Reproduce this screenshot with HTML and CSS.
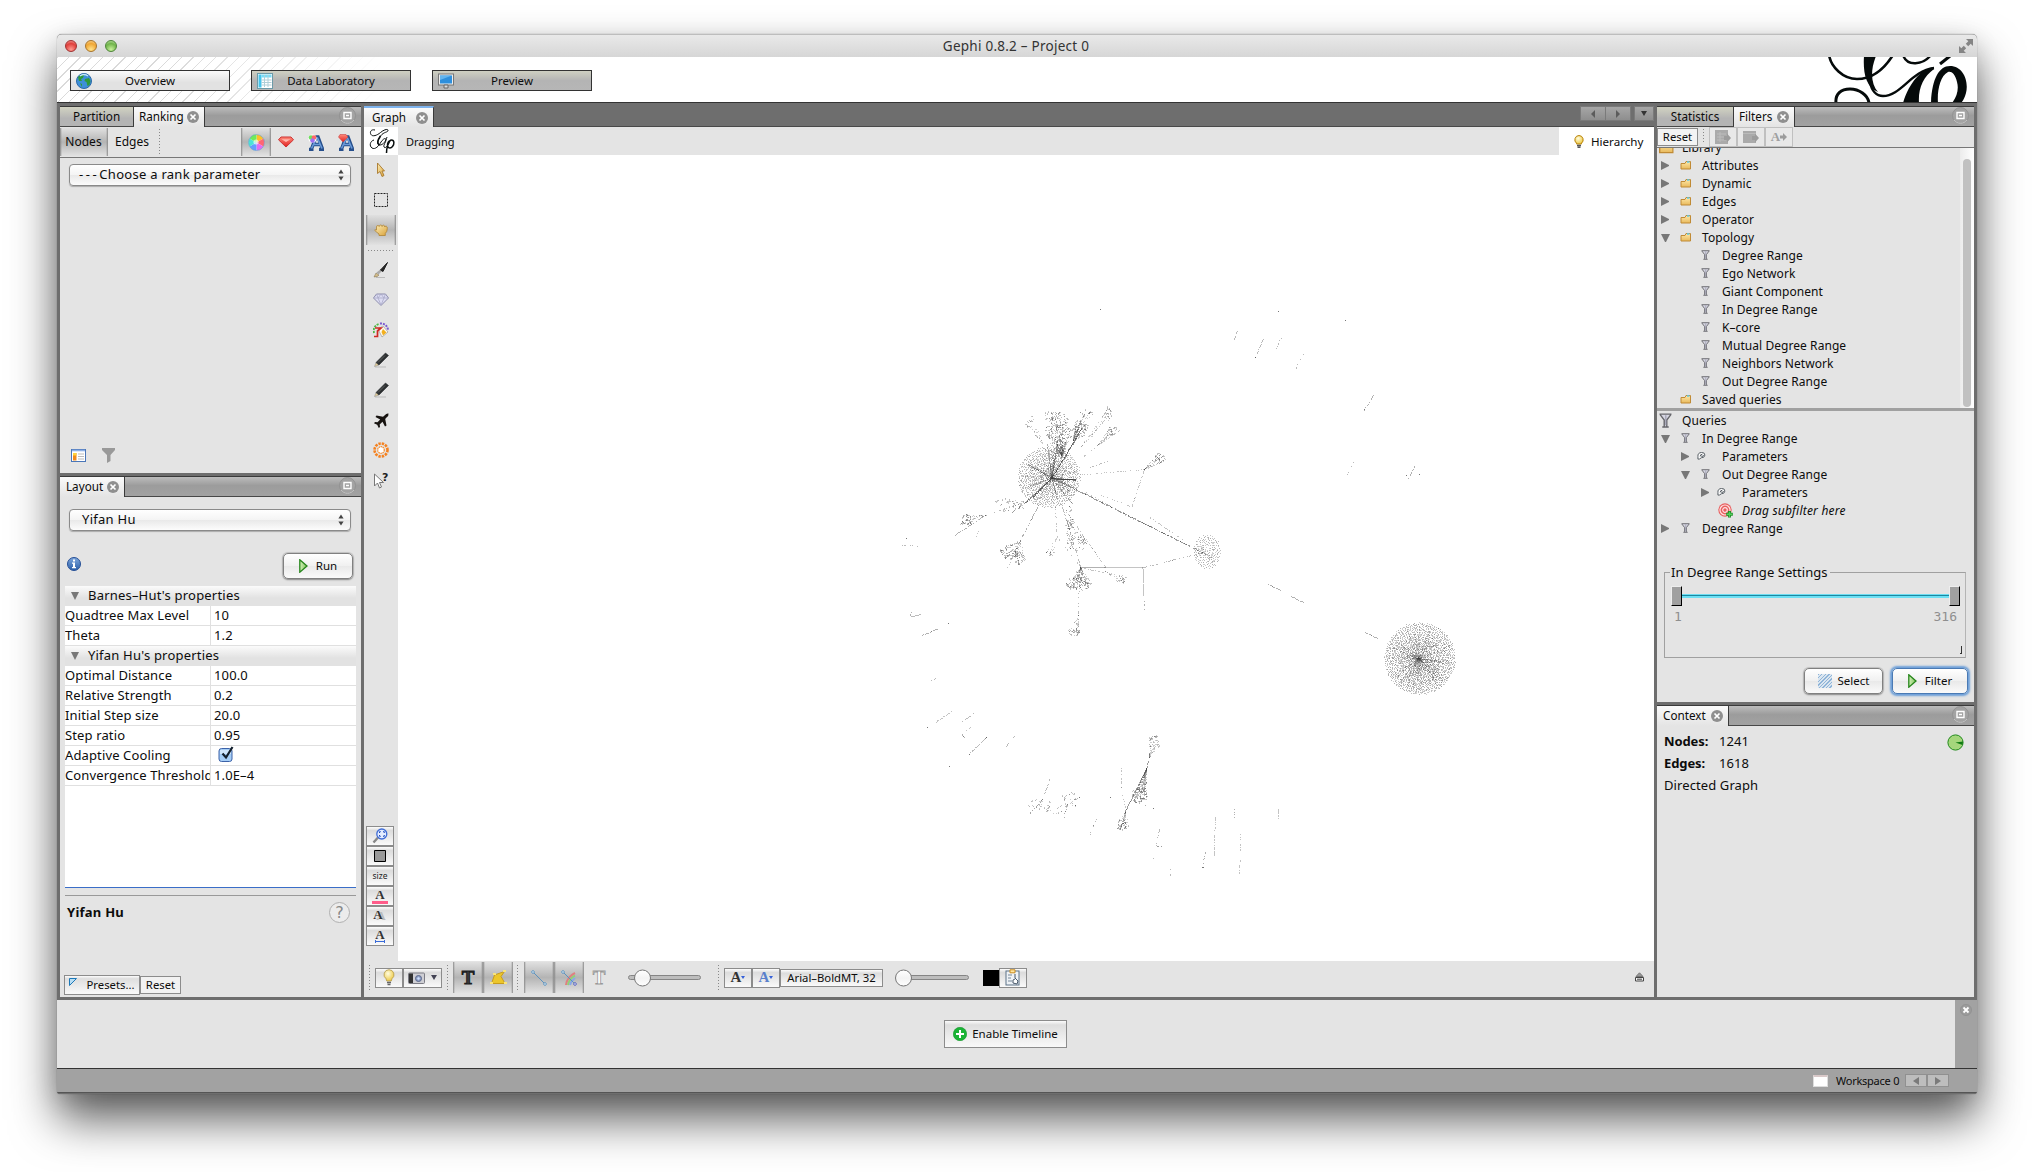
FILE: index.html
```html
<!DOCTYPE html>
<html lang="en">
<head>
<meta charset="utf-8">
<title>Gephi 0.8.2 - Project 0</title>
<link rel="stylesheet" href="styles.css">
</head>
<body>
<svg class="defs" width="0" height="0" aria-hidden="true">
  <defs>
    <linearGradient id="gold" x1="0" y1="0" x2="1" y2="1"><stop offset="0" stop-color="#fdeeb8"/><stop offset="1" stop-color="#d9a23a"/></linearGradient>
    <linearGradient id="fold" x1="0" y1="0" x2="0" y2="1"><stop offset="0" stop-color="#ffe9a8"/><stop offset="1" stop-color="#e8b95c"/></linearGradient>
    <linearGradient id="play" x1="0" y1="0" x2="1" y2="0"><stop offset="0" stop-color="#d4f2b8"/><stop offset="1" stop-color="#7cc05a"/></linearGradient>
    <linearGradient id="knob" x1="0" y1="0" x2="0" y2="1"><stop offset="0" stop-color="#fff"/><stop offset=".5" stop-color="#f3f3f3"/><stop offset="1" stop-color="#fff"/></linearGradient>
    <linearGradient id="red" x1="0" y1="0" x2="0" y2="1"><stop offset="0" stop-color="#ff8a7a"/><stop offset="1" stop-color="#e02020"/></linearGradient>
    <linearGradient id="blue" x1="0" y1="0" x2="0" y2="1"><stop offset="0" stop-color="#7fa8dc"/><stop offset="1" stop-color="#2a5ea8"/></linearGradient>
    <radialGradient id="bulb" cx=".4" cy=".35" r=".7"><stop offset="0" stop-color="#fffde0"/><stop offset="1" stop-color="#ecc63c"/></radialGradient>
  </defs>
  <symbol id="close" viewBox="0 0 12 12"><circle cx="6" cy="6" r="6" fill="#8f8f8f"/><path d="M3.500 3.500l5 5M8.500 3.500l-5 5" stroke="#fff" stroke-width="1.700"/></symbol>
  <symbol id="min" viewBox="0 0 17 17"><circle cx="8.500" cy="8.500" r="8" fill="#a3a3a3" stroke="#8e8e8e" stroke-width=".8"/><path d="M2 13a8 8 0 0 0 13 0" fill="none" stroke="#c4c4c4"/><path d="M5 5.500h7v6H5zM7 8.500h3" fill="none" stroke="#fff" stroke-width="1.400"/></symbol>
  <symbol id="folder" viewBox="0 0 11 10"><path d="M1 3.500h4l1-2h4.500v7.500h-9.500z" fill="url(#fold)" stroke="#c08a35"/><path d="M7 2h2.500" stroke="#5cc8e8" stroke-width="1.500"/></symbol>
  <symbol id="funnel" viewBox="0 0 12 14"><path d="M2 1.500h8L6.900 6.500V12H5.100V6.500z" fill="#d6d6e2"/><path d="M.4 1h11.200M1 1.500l3.800 5v6M11 1.500L7.200 6.500v6M3 13h6" fill="none" stroke="#66666c" stroke-width="1.300"/><path d="M6.300 2v9.500" stroke="#99a"/></symbol>
  <symbol id="wrench" viewBox="0 0 10 9"><path d="M1 8V5q-.5-4 4-4.500 4 0 3.800 3-.3 3-4 3Q2.500 8.500 1 8zM3.500 5q0-2.500 2.500-2.500M4.500 4.500l2 .5.800-1.500" fill="#fff" stroke="#555c62" stroke-width="1.100"/></symbol>
  <symbol id="playic" viewBox="0 0 9 14"><path d="M.8.8L8 7 .8 13.200z" fill="url(#play)" stroke="#25851b" stroke-width="1.300"/></symbol>
  <symbol id="gem" viewBox="0 0 16 12"><path d="M3 1h10l2.500 2.800L8 11 .5 3.800z"/><path d="M3.500 3.200h9L8 6z" fill="#ffb9ae" stroke="none"/></symbol>
  <symbol id="wheel" viewBox="0 0 17 17"><circle cx="8.500" cy="8.500" r="8.200" fill="#fff"/>
    <g opacity=".85"><path d="M8.500 8.500L8.500.5A8 8 0 0 1 15.400 4.500z" fill="#ffb400"/><path d="M8.500 8.500L15.400 4.500a8 8 0 0 1 0 8z" fill="#ff4d5b"/><path d="M8.500 8.500L15.400 12.500a8 8 0 0 1-6.900 4z" fill="#e052f0"/><path d="M8.500 8.500V16.500a8 8 0 0 1-6.900-4z" fill="#4a8cff"/><path d="M8.500 8.500L1.600 12.500a8 8 0 0 1 0-8z" fill="#2de0d0"/><path d="M8.500 8.500L1.600 4.500A8 8 0 0 1 8.500.5z" fill="#58e83e"/></g><circle cx="8.500" cy="8.500" r="8" fill="none" stroke="#6aa0c8" stroke-width=".7"/><circle cx="8" cy="8" r="2.600" fill="#fff" opacity=".6"/></symbol>
  <symbol id="pencil" viewBox="0 0 16 16"><path d="M2 15h11" stroke="#bbb"/><path d="M1.500 14.500l1.500-4 3 2.500z" fill="#e5cf9a" stroke="#888" stroke-width=".5"/><path d="M3 10.500L12.500 1l3 2.500L6 13z" fill="#2c2f30" stroke="#2c2f30" stroke-width=".6"/><path d="M5 10.500l7-7" stroke="#777" stroke-width=".7"/></symbol>
  <symbol id="comboarr" viewBox="0 0 6 12"><path d="M3 .5L5.600 4.500H.4zM3 11.500L5.600 7.500H.4z" fill="#444"/></symbol>
</svg>

<main class="window">
  <header class="titlebar">
    <div class="lights"><i class="l-red"></i><i class="l-yellow"></i><i class="l-green"></i></div>
    <span class="title">Gephi 0.8.2 – Project 0</span>
    <svg class="expand" width="14" height="14" viewBox="0 0 14 14"><path d="M7 0h7v7l-2.300-2.300-2.500 2.500L6.800 4.800 9.300 2.300zM7 14H0V7l2.300 2.300 2.500-2.500 2.400 2.400-2.500 2.500z" fill="#858585"/></svg>
  </header>

  <nav class="banner">
    <div class="stripes"></div>
    <div class="persp active"><svg width="16" height="16" viewBox="0 0 16 16"><circle cx="8" cy="8" r="7.500" fill="#3d8fd8" stroke="#2a68a8"/><path d="M2 4q3-3 6-2l-1 3-2 1 1 2-3 0z M9 6l4-1 1.500 3-1 4-2 1-1-4-2-1z M4 10l2 1 0 3z" fill="#2f9a3a"/><path d="M4 3q4-3 8 0" stroke="#c4e8fa" stroke-width="1.500" fill="none"/></svg><span>Overview</span></div>
    <div class="persp"><svg width="16" height="16" viewBox="0 0 16 16"><rect x=".5" y=".5" width="15" height="15" fill="#fff" stroke="#6c9aa8"/><path d="M1.500 1.500h3v13h-3z" fill="#45c4ec"/><path d="M4.500 1.500h10v3h-10z" fill="#7adcf5"/><path d="M4.500 7h10M4.500 9.500h10M4.500 12h10M7.500 2v12M11 2v12" stroke="#b0cfd8"/></svg><span>Data Laboratory</span></div>
    <div class="persp"><svg width="16" height="16" viewBox="0 0 16 16"><rect x=".5" y="1" width="15" height="11" fill="#eee" stroke="#777"/><rect x="2" y="2.500" width="12" height="8" fill="#2e8fdc"/><path d="M2 7l12-4.500V2.500H2z" fill="#62b4ee"/><path d="M6 12h4v3H6z" fill="#ddd" stroke="#666"/></svg><span>Preview</span></div>
    <svg class="brand" width="142" height="45" viewBox="0 0 142 45" fill="none" stroke="#050a0a">
      <path d="M2-2C4 10 16 22 30 22S56 14 66-2" stroke-width="2.600"/>
      <path d="M45-2C38 14 42 39 56 39 74 39 84 14 107 11" stroke-width="2.400"/>
      <path d="M37-1h12C43 14 44 27 51 35 38 30 36 14 37-1z" fill="#050a0a" stroke="none"/>
      <path d="M9 46C8 37 14 32 23 32S41 38 42 46" stroke-width="3"/>
      <path d="M76-2C80 10 96 8 104-2" stroke-width="2.400"/>
      <path d="M123-1L113 7" stroke-width="3"/>
      <path d="M107 10C94 12 82 26 76 46h16C91 32 96 20 107 12z" fill="#050a0a" stroke="none"/>
      <path fill-rule="evenodd" d="M104 46C105 22 112 9 123 9 136 9 142 24 139 36 138 40 136 44 134 46h-9C130 40 132 32 130 25 128 16 124 14 121 15 113 19 110 34 111 46z" fill="#050a0a" stroke="none"/>
    </svg>
  </nav>

  <div class="work">
    <div class="col left">
      <section class="panel ranking">
        <div class="tabs"><div class="tab t-part">Partition</div><div class="tab on t-rank">Ranking<svg class="x" width="12" height="12"><use href="#close"/></svg></div><svg class="mn" width="17" height="17"><use href="#min"/></svg></div>
        <div class="ranktools">
          <div class="tog nodes">Nodes</div><span class="edges">Edges</span><i class="grip"></i>
          <div class="rankicons">
            <div class="tog ic"><svg width="17" height="17"><use href="#wheel"/></svg></div>
            <div class="ic"><svg width="16" height="12" fill="url(#red)" stroke="#c33"><use href="#gem"/></svg></div>
            <div class="ic"><svg width="17" height="17" viewBox="0 0 17 17"><path d="M1 15.500h4.500M11 15.500h5M3.500 15L8 3h2l4.500 12M5.500 10.500h7" stroke="#264f8c" stroke-width="3.400" fill="none"/><path d="M3.500 14.500L8.500 4h1l4.500 10.500M5.500 10.500h7" stroke="#6a9ad8" stroke-width="1.600" fill="none"/><circle cx="4.500" cy="4.500" r="4" fill="#fff"/><circle cx="3" cy="3.500" r="2.300" fill="#6fe060"/><circle cx="6" cy="3.500" r="2.300" fill="#f66"/><circle cx="4.500" cy="6.500" r="2.300" fill="#a070f0"/></svg></div>
            <div class="ic"><svg width="17" height="17" viewBox="0 0 17 17"><path d="M1 15.500h4.500M11 15.500h5M3.500 15L8 3h2l4.500 12M5.500 10.500h7" stroke="#264f8c" stroke-width="3.400" fill="none"/><path d="M3.500 14.500L8.500 4h1l4.500 10.500M5.500 10.500h7" stroke="#6a9ad8" stroke-width="1.600" fill="none"/><path d="M2 .5h6L10 3 5 8 .5 3z" fill="url(#red)" stroke="#c44" stroke-width=".6"/></svg></div>
          </div>
        </div>
        <div class="rankbody">
          <div class="combo"><span><em>---</em>Choose a rank parameter</span><svg width="6" height="12"><use href="#comboarr"/></svg></div>
          <div class="rankfoot">
            <svg width="15" height="13" viewBox="0 0 15 13"><rect x=".5" y=".5" width="14" height="12" fill="#fff" stroke="#4a76b8"/><path d="M1 1.500h13" stroke="#8fb2e6" stroke-width="1.600"/><path d="M2 4h3.500v7.500H2z" fill="#f08a1c"/><path d="M2 4h3.500v2.500H2z" fill="#ffd23c"/><path d="M7 5h6M7 7.500h6M7 10h6" stroke="#bbb"/></svg>
            <svg width="13" height="15" viewBox="0 0 13 15"><path d="M0 0h13v2L8.500 7v6L5 15V7L0 2z" fill="#999"/></svg>
          </div>
        </div>
      </section>
      <section class="panel layout">
        <div class="tabs"><div class="tab on t-lay">Layout<svg class="x" width="12" height="12"><use href="#close"/></svg></div><svg class="mn" width="17" height="17"><use href="#min"/></svg></div>
        <div class="laybody">
          <div class="combo yh"><span>Yifan Hu</span><svg width="6" height="12"><use href="#comboarr"/></svg></div>
          <div class="runrow">
            <svg width="14" height="14" viewBox="0 0 14 14"><circle cx="7" cy="7" r="6.500" fill="url(#blue)" stroke="#264f96"/><path d="M6 2.500h2v2H6zM5 5.500h3v4.500h1v1.200H5V10h1V6.700H5z" fill="#fff"/></svg>
            <button class="aqua run"><svg width="9" height="14"><use href="#playic"/></svg><span>Run</span></button>
          </div>
          <div class="sheet">
            <div class="grp"><i class="dn"></i>Barnes–Hut's properties</div>
            <div class="prop"><span>Quadtree Max Level</span><b>10</b></div>
            <div class="prop"><span>Theta</span><b>1.2</b></div>
            <div class="grp"><i class="dn"></i>Yifan Hu's properties</div>
            <div class="prop"><span>Optimal Distance</span><b>100.0</b></div>
            <div class="prop"><span>Relative Strength</span><b>0.2</b></div>
            <div class="prop"><span>Initial Step size</span><b>20.0</b></div>
            <div class="prop"><span>Step ratio</span><b>0.95</b></div>
            <div class="prop"><span>Adaptive Cooling</span><b><svg class="chk" width="16" height="16" viewBox="0 0 16 16"><rect x="1" y="2.500" width="13" height="13" rx="2.500" fill="#a5cdf6" stroke="#3c62a8"/><path d="M2 4h11v4H2z" fill="#cfe5fb"/><path d="M4.500 7.500l3.500 4L14.500 1" fill="none" stroke="#14202c" stroke-width="2.200"/></svg></b></div>
            <div class="prop"><span>Convergence Threshold</span><b>1.0E–4</b></div>
          </div>
          <div class="desc"><strong>Yifan Hu</strong><span class="help">?</span></div>
          <div class="layfoot"><button class="flat presets"><svg width="8" height="8" viewBox="0 0 8 8"><path d="M.5 .5h7L.5 7.500z" fill="#b8def4" stroke="#1c78b8"/></svg><span>Presets...</span></button><button class="flat rst"><span>Reset</span></button></div>
        </div>
      </section>
    </div>

    <section class="col graph">
      <div class="tabs dark"><div class="tab on t-graph">Graph<svg class="x" width="12" height="12"><use href="#close"/></svg></div>
        <div class="navs"><i class="nv"><b class="tl"></b></i><i class="nv"><b class="tr"></b></i><i class="nv dd"><b class="td"></b></i></div></div>
      <div class="gstatus">
        <div class="glogo"><svg width="26" height="26" viewBox="0 0 26 26" fill="none" stroke="#0a0f0f"><path d="M6 2C2 1 .5 4 2 6.500s6 1 9.500-2S19 .5 19 2.500s-4 1-7.500 5.500S8 17 11 17s6-4 7-8" stroke-width="1"/><path d="M11.500 8C8 13 8 16 10.500 17" stroke-width="1.700"/><path d="M5 12C1 13 0 18 3 20s7-2 9-6c2-3 5-5 5-2 0 2-3 5-2 7s4-1 6-6" stroke-width="1"/><path d="M17.500 25c0-5 2-13 5-13s3 4 1 6.500-5 1.500-5-1 1-4 2-4.500" stroke-width="1.500"/></svg></div>
        <span class="drag">Dragging</span>
        <div class="hier"><svg width="10" height="13" viewBox="0 0 10 13"><path d="M5 .5a4.300 4.300 0 0 1 2.500 7.700V9h-5V8.200A4.300 4.300 0 0 1 5 .5z" fill="url(#bulb)" stroke="#b8820a"/><path d="M3 10.500h4M3.500 12.300h3" stroke="#555" stroke-width="1.400"/></svg><span>Hierarchy</span></div>
      </div>
      <div class="gmain">
        <div class="gtools">
          <div class="gt"><svg width="16" height="16" viewBox="0 0 16 16"><path d="M4.500 1v10.500L7 9.500l2 5 2-1-2-4.500h2.500z" fill="url(#gold)" stroke="#a8782c" stroke-width=".9"/></svg></div>
          <div class="gt"><svg width="16" height="16" viewBox="0 0 16 16"><rect x="1.500" y="1.500" width="13" height="13" fill="none" stroke="#222" stroke-dasharray="2 1"/></svg></div>
          <div class="gt tog"><svg width="16" height="16" viewBox="0 0 16 16"><path d="M3.500 8V5q0-1.500 1.300-1.500T6.200 4.500q.2-1.500 1.500-1.500t1.400 1.500Q9.500 3 10.600 3.200T11.800 5q.4-1.200 1.500-.8t1 2.300q0 3-2 5V13.500H6V12Q4 10.500 1.800 8.500q-.6-1.300 1.700-.5z" fill="url(#gold)" stroke="#b08434" stroke-width=".8"/></svg></div>
          <i class="hgrip"></i>
          <div class="gt"><svg width="16" height="16" viewBox="0 0 16 16"><path d="M3 15.500h9" stroke="#bbb"/><path d="M1 15l2-4 3 2q-1 2-5 2z" fill="#d4bd8a" stroke="#7a6a4a" stroke-width=".5"/><path d="M3.500 10.500l2 2 4-4-1.500-1.500z" fill="#aaa"/><path d="M7.500 8L14.500.5 10 9.500z" fill="#222" stroke="#222"/></svg></div>
          <div class="gt"><svg width="16" height="14" viewBox="0 0 16 14"><path d="M3.500 1h9L15.500 5 8 12.500.5 5z" fill="#dcdcf2" stroke="#8d8dac"/><path d="M.5 5h15M5 5l3 7 3-7M3.500 1L5 5l3-4 3 4 1.500-4" fill="none" stroke="#a9a9c8" stroke-width=".8"/></svg></div>
          <div class="gt"><svg width="16" height="16" viewBox="0 0 16 16"><path d="M7 1.500A7 7 0 0 1 15 8" fill="none" stroke="#7a5ad0" stroke-width="2" stroke-dasharray="2 1"/><path d="M1 11A7 7 0 0 1 6 2" fill="none" stroke="#4fb848" stroke-width="2" stroke-dasharray="2 1"/><path d="M5 7l5-3 5 6-6 5z" fill="#fffaf0" stroke="#999" stroke-width=".7"/><path d="M10 7l3.500 3.500L10 13.500 8.500 10z" fill="#f2b01e"/><path d="M2 6h6L4.500 9v5.500H1" fill="none" stroke="#cf2a22" stroke-width="1.700"/></svg></div>
          <div class="gt"><svg width="16" height="16"><use href="#pencil"/></svg></div>
          <div class="gt"><svg width="16" height="16"><use href="#pencil"/></svg></div>
          <div class="gt"><svg width="15" height="15" viewBox="0 0 15 15"><path d="M14.500.5q-2-.5-4 2L9 3.800 2.500 2.500 1.500 4l4.700 2.500L3.500 9.300 1 9l-1 1.200 3.200 1.600 1.600 3.200 1.200-1-.3-2.500 2.800-2.700 2.500 4.700 1.500-1L11.200 6l1.300-1.500q2.500-2 2-4z" fill="#171310"/></svg></div>
          <div class="gt"><svg width="16" height="16" viewBox="0 0 16 16"><circle cx="8" cy="8" r="6.500" fill="none" stroke="#f58220" stroke-width="2.600" stroke-dasharray="2.400 1"/><circle cx="8" cy="8" r="3.300" fill="#fff" stroke="#f58a2a" stroke-width="1.200" stroke-dasharray="1.500 .6"/></svg></div>
          <div class="gt"><svg width="16" height="17" viewBox="0 0 16 17"><path d="M1.500 2v12L4.500 11l2 5 2-1-2-4.500h4z" fill="#fff" stroke="#777"/><text x="9" y="9" font-family="DejaVu Sans" font-weight="bold" font-size="11" fill="#222">?</text></svg></div>
          <div class="vbtns">
            <div class="vb"><svg width="16" height="16" viewBox="0 0 16 16"><path d="M1.500 14.500L6 9.500" stroke="#888" stroke-width="2.400"/><circle cx="9.800" cy="6" r="5" fill="#e4edff" stroke="#3f6cd6" stroke-width="1.300"/><path d="M7.500 5V3.700h1.300M11 3.700h1.300V5M12.300 7v1.300H11M8.800 8.300H7.500V7" fill="none" stroke="#2450c0"/></svg></div>
            <div class="vb"><svg width="12" height="12" viewBox="0 0 12 12"><path d="M.5.5h11v11H.5z" fill="#999" stroke="#000"/></svg></div>
            <div class="vb sz"><span>size</span></div>
            <div class="vb ser"><span class="pink">A</span></div>
            <div class="vb ser"><span class="ghost">A</span></div>
            <div class="vb ser"><span class="wid">A</span></div>
          </div>
        </div>
        <canvas id="net" width="1256" height="806"></canvas>
      </div>
      <div class="gfoot">
        <i class="grip"></i>
        <div class="fb b1"><svg width="12" height="17" viewBox="0 0 12 17"><path d="M6 .7a5 5 0 0 1 3 9l-.7 2.300H3.700L3 9.700a5 5 0 0 1 3-9z" fill="url(#bulb)" stroke="#b39a50" stroke-width=".8"/><path d="M4 13.500h4M4.500 15.500h3" stroke="#666" stroke-width="1.500"/></svg></div>
        <div class="fb b2"><svg width="17" height="12" viewBox="0 0 17 12"><rect x=".5" y="1" width="16" height="10.500" rx="1" fill="#cfcfd4" stroke="#7c7c84"/><path d="M1 1.500h4v9.500H1z" fill="#333"/><circle cx="10.500" cy="6.500" r="3" fill="#8fa0c4" stroke="#5a668a"/><circle cx="10.500" cy="6.500" r="1.200" fill="#cfe0ff"/></svg><i class="arr"></i></div>
        <i class="grip g2"></i>
        <div class="tog ft"><span class="tbig">T</span></div>
        <div class="tog ft"><svg width="17" height="15" viewBox="0 0 17 15"><path d="M1.500 13.500L4.500 5 14.500 1.500 11 6.500l4 7z" fill="#ecc62a" stroke="#c79c1c"/><path d="M0 13h3M3 4h3M13 1h3M14 13h3" stroke="#f9e47c" stroke-width="2"/></svg></div>
        <i class="grip g3"></i>
        <div class="tog ft"><svg width="16" height="16" viewBox="0 0 16 16"><path d="M2.500 2.500l11 11" stroke="#5d93be"/><circle cx="2" cy="2" r="1.300" fill="#fff" stroke="#5d93be"/><circle cx="14" cy="14" r="1.300" fill="#fff" stroke="#5d93be"/></svg></div>
        <div class="tog ft"><svg width="16" height="16" viewBox="0 0 16 16"><path d="M5 15Q6 7 14 3" stroke="#e08080" stroke-width="2" fill="none"/><path d="M7 15Q8 9 14 5.500" stroke="#90cf78" stroke-width="2" fill="none"/><path d="M9 15Q10 11 14 8" stroke="#88a8e8" stroke-width="2" fill="none"/><path d="M2.500 2.500l11 11" stroke="#5d93be"/><circle cx="2" cy="2" r="1.300" fill="#fff" stroke="#5d93be"/><circle cx="14" cy="14" r="1.300" fill="#fff" stroke="#5560be"/></svg></div>
        <div class="ft"><span class="tout">T</span></div>
        <svg class="sl1" width="73" height="20" viewBox="0 0 73 20"><rect x=".5" y="7.500" width="72" height="4" rx="2" fill="#bdbdbd" stroke="#858585"/><circle cx="14.500" cy="10" r="8" fill="url(#knob)" stroke="#777"/></svg>
        <i class="grip g4"></i>
        <div class="fb b3 ser">A<i></i></div><div class="fb b4 ser">A<i></i></div>
        <div class="fb b5"><span>Arial–BoldMT, 32</span></div>
        <svg class="sl2" width="74" height="20" viewBox="0 0 74 20"><rect x="1.500" y="7.500" width="72" height="4" rx="2" fill="#bdbdbd" stroke="#858585"/><circle cx="8.500" cy="10" r="8" fill="url(#knob)" stroke="#777"/></svg>
        <i class="black"></i>
        <div class="fb b6"><svg width="16" height="17" viewBox="0 0 16 17"><rect x="1" y="2" width="13" height="14" fill="#eef2f6" stroke="#5c7388"/><path d="M5 .8h5v3H5z" fill="#ffe6a0" stroke="#c98a1e"/><path d="M3 6h4M3 9h3M3 12h4" stroke="#789"/><path d="M10 5v4l3 3-1 3-4-1 0-3 2-1" fill="#fff" stroke="#48586a"/></svg></div>
        <svg class="eject" width="9" height="10" viewBox="0 0 9 10"><path d="M4.500.8L8 4.500H1z" fill="#999" stroke="#777"/><path d="M.5 5.500h8v3.500h-8zM2 7.200h5" fill="#f4f4f4" stroke="#444"/></svg>
      </div>
    </section>

    <div class="col right">
      <section class="panel filters">
        <div class="tabs"><div class="tab t-stat">Statistics</div><div class="tab on t-filt">Filters<svg class="x" width="12" height="12"><use href="#close"/></svg></div><svg class="mn" width="17" height="17"><use href="#min"/></svg></div>
        <div class="ftools"><button class="flat freset"><span>Reset</span></button><i class="grip"></i>
          <div class="dis"><svg width="16" height="14" viewBox="0 0 16 14"><path d="M0 0h13v14H0z" fill="#aaa"/><path d="M2 4h9M2 7h9M2 10h9M5 2v10" stroke="#bcbcbc"/><path d="M9 6h3V3.500L16 8l-4 4.500V10H9z" fill="#9c9c9c"/></svg></div>
          <div class="dis"><svg width="16" height="14" viewBox="0 0 16 14"><path d="M0 1h13v12H0z" fill="#aaa"/><path d="M0 3.500h13" stroke="#bbb"/><path d="M9 6h3V3.500L16 8l-4 4.500V10H9z" fill="#9c9c9c"/></svg></div>
          <div class="dis ser">A<svg width="7" height="8" viewBox="0 0 7 8"><path d="M0 2.500h3V0l4 4-4 4V5.500H0z" fill="#9c9c9c"/></svg></div></div>
        <div class="lib">
          <div class="tree" id="lib">
            <div class="row root"><svg width="16" height="14" viewBox="0 0 11 10"><use href="#folder"/></svg>Library</div>
            <div class="row l1"><i class="rt"></i><svg width="11" height="10"><use href="#folder"/></svg>Attributes</div>
            <div class="row l1"><i class="rt"></i><svg width="11" height="10"><use href="#folder"/></svg>Dynamic</div>
            <div class="row l1"><i class="rt"></i><svg width="11" height="10"><use href="#folder"/></svg>Edges</div>
            <div class="row l1"><i class="rt"></i><svg width="11" height="10"><use href="#folder"/></svg>Operator</div>
            <div class="row l1"><i class="dn"></i><svg width="11" height="10"><use href="#folder"/></svg>Topology</div>
            <div class="row l2"><i></i><svg width="9" height="10"><use href="#funnel"/></svg>Degree Range</div>
            <div class="row l2"><i></i><svg width="9" height="10"><use href="#funnel"/></svg>Ego Network</div>
            <div class="row l2"><i></i><svg width="9" height="10"><use href="#funnel"/></svg>Giant Component</div>
            <div class="row l2"><i></i><svg width="9" height="10"><use href="#funnel"/></svg>In Degree Range</div>
            <div class="row l2"><i></i><svg width="9" height="10"><use href="#funnel"/></svg>K–core</div>
            <div class="row l2"><i></i><svg width="9" height="10"><use href="#funnel"/></svg>Mutual Degree Range</div>
            <div class="row l2"><i></i><svg width="9" height="10"><use href="#funnel"/></svg>Neighbors Network</div>
            <div class="row l2"><i></i><svg width="9" height="10"><use href="#funnel"/></svg>Out Degree Range</div>
            <div class="row l1"><i></i><svg width="11" height="10"><use href="#folder"/></svg>Saved queries</div>
          </div>
          <div class="scroll"><i></i></div>
        </div>
        <div class="split"></div>
        <div class="tree queries">
          <div class="row root"><svg class="fq" width="13" height="15"><use href="#funnel"/></svg>Queries</div>
          <div class="row l1"><i class="dn"></i><svg width="9" height="10"><use href="#funnel"/></svg>In Degree Range</div>
          <div class="row l2"><i class="rt"></i><svg class="wr" width="9" height="8"><use href="#wrench"/></svg>Parameters</div>
          <div class="row l2"><i class="dn"></i><svg width="9" height="10"><use href="#funnel"/></svg>Out Degree Range</div>
          <div class="row l3"><i class="rt"></i><svg class="wr" width="9" height="8"><use href="#wrench"/></svg>Parameters</div>
          <div class="row l3 sub"><i></i><svg width="16" height="15" viewBox="0 0 16 15"><circle cx="7" cy="7" r="6.700" fill="#e86060"/><circle cx="7" cy="7" r="5" fill="none" stroke="#ffe2e2" stroke-width="1.200"/><circle cx="7" cy="7" r="2.300" fill="none" stroke="#ffe2e2" stroke-width="1.200"/><path d="M11.500 8v6.500M8.200 11.300h6.600" stroke="#1c8a24" stroke-width="3"/><path d="M11.500 8.700v5.200M8.800 11.300h5.400" stroke="#4fd05a" stroke-width="1.400"/></svg>Drag subfilter here</div>
          <div class="row l1"><i class="rt"></i><svg width="9" height="10"><use href="#funnel"/></svg>Degree Range</div>
        </div>
        <fieldset class="settings"><legend>In Degree Range Settings</legend>
          <div class="range"><i class="h"></i><i class="bar"></i><i class="h"></i></div>
          <div class="nums"><span>1</span><span>316</span></div>
          <div class="corner"></div>
        </fieldset>
        <div class="acts"><button class="aqua sel"><i></i><span>Select</span></button><button class="aqua fil"><svg width="9" height="14"><use href="#playic"/></svg><span>Filter</span></button></div>
      </section>
      <section class="panel context">
        <div class="tabs"><div class="tab on t-ctx">Context<svg class="x" width="12" height="12"><use href="#close"/></svg></div><svg class="mn" width="17" height="17"><use href="#min"/></svg></div>
        <div class="ctx">
          <div><p><strong>Nodes:</strong>1241</p><p><strong>Edges:</strong>1618</p><p>Directed Graph</p></div>
          <svg width="17" height="17" viewBox="0 0 17 17"><circle cx="8.500" cy="8.500" r="7.600" fill="#a4d67c" stroke="#1f8a1a"/><path d="M8.500 8.500L16 7.500 15.500 11z" fill="#0f7a12"/></svg>
        </div>
      </section>
    </div>
  </div>

  <div class="timeline"><button class="flat enable"><svg width="14" height="14" viewBox="0 0 14 14"><circle cx="7" cy="7" r="6.700" fill="#1ab436" stroke="#129428" stroke-width=".6"/><path d="M7 3v8M3 7h8" stroke="#fff" stroke-width="2"/></svg><span>Enable Timeline</span></button>
    <div class="tclose"><svg width="12" height="12" viewBox="0 0 12 12"><circle cx="6" cy="6" r="5.500" fill="#9c9c9c" stroke="#8c8c8c" stroke-width=".7"/><path d="M3.500 3.500l5 5M8.500 3.500l-5 5" stroke="#fff" stroke-width="1.800"/></svg></div></div>
  <footer class="statusbar"><i class="wsic"></i><span>Workspace 0</span><div class="wn"><b class="tl"></b></div><div class="wn"><b class="tr"></b></div></footer>
</main>
<script src="graph.js"></script>
</body>
</html>
```
FILE: styles.css
```css
* { box-sizing: border-box; }
html, body { margin: 0; width: 2034px; height: 1172px; overflow: hidden; background: #fff; }
body { font-family: "Lucida Grande", "Noto Sans", sans-serif; font-size: 12px; color: #0c0c0c; padding: 34px 57px 0; }
i, b, em { font-style: normal; font-weight: normal; }
svg { display: block; flex: none; }
svg.defs { position: absolute; }
button { font: inherit; color: inherit; padding: 0; margin: 0; }
.window { width: 1920px; height: 1060px; display: flex; flex-direction: column; border-radius: 5px 5px 3px 3px; overflow: clip; background: #6e6e6e; box-shadow: 0 0 1px rgba(0,0,0,.5), 0 26px 46px rgba(0,0,0,.62), 0 6px 24px rgba(0,0,0,.12); }

.titlebar { height: 23px; flex: none; display: flex; align-items: center; background: linear-gradient(#e9e9e9, #d6d6d6); border-top: 1px solid #bdbdbd; padding: 0 4px 0 8px; }
.lights { display: flex; gap: 8px; width: 60px; }
.lights i { width: 12px; height: 12px; border-radius: 50%; border: 1px solid; }
.lights .l-red { background: radial-gradient(circle at 50% 85%, #ff9c92, #e0403c 60%, #f4a9a4); border-color: #a03030; }
.lights .l-yellow { background: radial-gradient(circle at 50% 85%, #ffe48c, #f0a634 60%, #fbdc9c); border-color: #a8742a; }
.lights .l-green { background: radial-gradient(circle at 50% 85%, #c9f29c, #70b44a 60%, #c4e8ac); border-color: #4d8438; }
.title { flex: 1; text-align: center; font-size: 13.500px; letter-spacing: .25px; color: #333; padding-right: 52px; }

.banner { height: 46px; flex: none; background: #fff; border-bottom: 1px solid #333; position: relative; display: flex; padding: 13px 0 0 13px; gap: 21px; }
.stripes { position: absolute; left: 0; top: 0; width: 330px; height: 45px; background: repeating-linear-gradient(135deg, #dadada 0 1px, transparent 1px 8px); -webkit-mask-image: linear-gradient(90deg, #000 35%, transparent); mask-image: linear-gradient(90deg, #000 35%, transparent); }
.persp { position: relative; width: 160px; height: 21px; border: 1px solid #333; background: linear-gradient(#cfd0c2, #b4b4b4 50%, #b6b6b6); display: flex; align-items: center; padding-left: 5px; font-size: 11.500px; }
.persp.active { background: linear-gradient(#fafafa, #e2e2e2 60%); }
.persp span { flex: 1; text-align: center; padding: 0 21px 1px 0; }
.brand { position: absolute; right: 8px; top: 0; }

.work { height: 897px; flex: none; display: flex; gap: 3px; padding: 3px; }
.col { display: flex; flex-direction: column; gap: 3px; }
.left { width: 301px; }
.graph { width: 1290px; gap: 0; background: #e4e4e4; }
.right { width: 317px; }
.panel { background: #e4e4e4; display: flex; flex-direction: column; }
.ranking { height: 367px; }
.layout { height: 521px; }
.filters { height: 596px; }
.context { height: 292px; }

.tabs { height: 21px; flex: none; display: flex; border-top: 1px solid #3a3a3a; border-bottom: 1px solid #484848; background: linear-gradient(#bcbcbc, #9c9c9c 45%, #a2a2a2); }
.tab { height: 20px; margin-bottom: -1px; border-right: 1px solid #3a3a3a; border-bottom: 1px solid #484848; display: flex; align-items: center; justify-content: center; background: linear-gradient(#d2d3c2, #b4b4b4 60%); font-size: 11.700px; padding-bottom: 1px; }
.tab.on { background: linear-gradient(#fafafa, #e4e4e4); border-bottom: 0; justify-content: flex-start; padding: 0 0 3px 5px; }
.x { margin: 2px 5px 0 auto; }
.mn { margin: 0 5px 0 auto; }
.t-part { width: 74px; }
.t-rank { width: 71px; }
.t-lay { width: 65px; }
.t-stat { width: 77px; }
.t-filt { width: 61px; }
.t-ctx { width: 72px; }
.tab.t-lay, .tab.t-ctx { padding-left: 6px; }
.tabs.dark { background: #6e6e6e; border-top-color: #6e6e6e; }
.tab.t-graph { width: 70px; border-top: 2px solid #7fb4ee; padding-left: 8px; height: 21px; margin-top: -1px; padding-bottom: 2px; }
.navs { display: flex; margin: -1px 0 0 auto; height: 15px; }
.nv { width: 26px; border: 1px solid #7a7a7a; background: linear-gradient(#a6a6a6, #8e8e8e); display: flex; align-items: center; justify-content: center; margin-right: -1px; }
.nv.dd { width: 20px; margin: 0 0 0 4px; }
.tl { border: 4px solid transparent; border-right-color: #5c5c5c; border-left: 0; }
.tr { border: 4px solid transparent; border-left-color: #5c5c5c; border-right: 0; }
.td { border: 3px solid transparent; border-top: 5px solid #333; border-bottom: 0; }

.tog { background: linear-gradient(90deg, #8a8a8a, transparent 2px, transparent calc(100% - 2px), #8a8a8a), linear-gradient(#e0e0e0, #b4b4b4 50%, #e2e2e2); }
.grip { width: 1px; height: 25px; flex: none; background: repeating-linear-gradient(#888 0 1px, transparent 1px 3px); }
.ranktools { height: 31px; border-bottom: 1px solid #777; display: flex; align-items: flex-start; font-size: 12px; padding-top: 1px; }
.nodes { width: 48px; height: 28px; line-height: 28px; text-align: center; padding-right: 1px; }
.edges { line-height: 28px; margin-left: 7px; width: 44px; }
.ranktools .grip { margin-top: 1px; }
.rankicons { display: flex; margin-left: 81px; }
.ic { width: 30px; height: 28px; display: flex; align-items: center; justify-content: center; }
.rankbody { flex: 1; display: flex; flex-direction: column; padding: 6px 10px 10px 9px; }
.combo { height: 22px; border: 1px solid #8a8a8a; border-radius: 4px; background: linear-gradient(#fff, #f4f4f4 50%, #e9e9e9 51%, #fcfcfc); box-shadow: 0 1px 1px rgba(0,0,0,.25); display: flex; align-items: center; justify-content: space-between; font-size: 13px; padding: 0 6px 0 9px; letter-spacing: .27px; }
.combo span { padding-bottom: 2px; }
.combo em { letter-spacing: 2.600px; }
.combo.yh { padding-left: 12px; }
.rankfoot { margin-top: auto; display: flex; gap: 16px; align-items: center; padding-left: 2px; }

.laybody { flex: 1; display: flex; flex-direction: column; padding: 12px 5px 2px 4px; }
.laybody .combo { margin: 0 5px; }
.runrow { display: flex; justify-content: space-between; margin: 21px 3px 0 3px; height: 27px; align-items: center; }
.runrow > svg { margin-bottom: 3px; }
.aqua { border: 1px solid #808080; border-radius: 5px; background: linear-gradient(#fff, #f0f0f0 50%, #e9e9e9 51%, #fafafa); box-shadow: 0 0 1px 1px rgba(0,0,0,.15), 0 1px 2px rgba(0,0,0,.3); height: 26px; display: flex; align-items: center; justify-content: center; gap: 8px; font-size: 11.500px; }
.aqua span { padding-bottom: 1px; }
.run { width: 70px; }
.sheet { margin: 7px 0 0 1px; height: 302px; background: #fff; border-bottom: 1px solid #3a6ec8; font-size: 13px; letter-spacing: .13px; }
.grp { height: 20px; background: linear-gradient(#fbfbfb, #e2e2e2 60%); display: flex; align-items: center; line-height: 17px; padding: 0 0 2px 6px; letter-spacing: .2px; }
.grp i { margin: 2px 9px 0 0; }
.dn { border: 4.500px solid transparent; border-top: 8px solid #777; border-bottom: 0; }
.rt { border: 4.500px solid transparent; border-left: 8px solid #777; border-right: 0; }
.prop { height: 20px; border-bottom: 1px solid #e0e0e0; display: flex; line-height: 18px; }
.prop span { width: 145px; overflow: hidden; white-space: nowrap; }
.prop b { border-left: 1px solid #e0e0e0; padding-left: 3px; flex: 1; }
.chk { margin: 0 0 0 4px; }
.desc { margin: 7px 0 0 1px; border-top: 1px solid #999; display: flex; justify-content: space-between; align-items: center; height: 34px; padding: 0 6px 0 2px; font-size: 13px; letter-spacing: .25px; }
.desc strong { padding-bottom: 1px; }
.help { width: 21px; height: 21px; border: 1px solid #b0b0b0; border-radius: 50%; background: #ececec; color: #888; text-align: center; font: 16px/19px "DejaVu Sans"; letter-spacing: 0; }
.layfoot { margin-top: auto; display: flex; align-items: center; }
.flat { border: 1px solid #8c8c8c; background: linear-gradient(#fcfcfc, #dedede 15%, #f9f9f9); display: flex; align-items: center; justify-content: center; font-size: 11.300px; }
.flat span { padding-bottom: 1px; }
.presets { width: 76px; height: 20px; }
.presets svg { margin: -7px 9px 0 0; }
.rst { width: 41px; height: 18px; background: #f2f2f2; }

.gstatus { height: 28px; flex: none; display: flex; align-items: center; background: #e4e4e4; }
.glogo { width: 34px; height: 28px; background: #fff; padding: 1px 0 0 5px; }
.drag { margin-left: 8px; font-size: 11px; }
.hier { margin-left: auto; width: 95px; height: 28px; background: #fff; display: flex; align-items: center; gap: 7px; padding-left: 15px; font-size: 11.600px; }
.gmain { height: 806px; display: flex; }
#net { display: block; background: #fff; }
.gtools { width: 34px; display: flex; flex-direction: column; padding-left: 2px; }
.gt { width: 30px; height: 30px; display: flex; align-items: center; justify-content: center; }
.hgrip { width: 26px; height: 1px; margin: 5px 2px 4px; background: repeating-linear-gradient(90deg, #888 0 1px, transparent 1px 3px); }
.vbtns { margin-top: auto; padding-bottom: 15px; }
.vb { width: 28px; height: 20px; border: 1px solid #8c8c8c; background: linear-gradient(#fdfdfd, #dcdcdc 20%, #fafafa); display: flex; align-items: center; justify-content: center; }
.sz { font-size: 8.500px; color: #222; }
.sz span { padding-bottom: 2px; }
.ser { font-family: "Liberation Serif", serif; font-weight: bold; font-size: 13px; color: #333; }
.ser span { line-height: 13px; height: 16px; width: 16px; text-align: center; }
.ser .pink { border-bottom: 3px solid #ff5c8a; }
.ghost { text-shadow: 3px 1px #bbb; padding-right: 4px; }
.wid { background: linear-gradient(#3a6bd8, #3a6bd8) 50% 13px / 10px 1px no-repeat, linear-gradient(#3a6bd8, #3a6bd8) 3px 12px / 1px 3px no-repeat, linear-gradient(#3a6bd8, #3a6bd8) 12px 12px / 1px 3px no-repeat; }
.gfoot { height: 36px; flex: none; display: flex; align-items: center; padding: 0 10px 3px 5px; }
.fb { height: 20px; border: 1px solid #8c8c8c; background: linear-gradient(#fdfdfd, #dcdcdc 20%, #fafafa); display: flex; align-items: center; justify-content: center; }
.b1 { width: 28px; margin-left: 5px; }
.b2 { width: 39px; gap: 6px; }
.arr { border: 3px solid transparent; border-top: 5px solid #445; border-bottom: 0; }
.g2 { margin: 0 5px; }
.ft { width: 30px; height: 31px; display: flex; align-items: center; justify-content: center; }
.g3 { margin: 0 6px 0 4px; }
.tbig { font: bold 19px/20px "Liberation Serif"; color: #3c3c3c; -webkit-text-stroke: 1px #1e1e1e; }
.tout { font: bold 19px/20px "Liberation Serif"; color: #fff; -webkit-text-stroke: .8px #999; }
.sl1 { margin-left: 14px; }
.g4 { margin: 0 5px 0 17px; }
.b3, .b4 { width: 28px; font-size: 15px; }
.fb.b4 { color: #5a80cc; }
.b3 i, .b4 i { border: 2px solid transparent; border-top: 3px solid #3560d8; border-bottom: 0; }
.b5 { width: 103px; height: 18px; font-size: 11.300px; white-space: nowrap; }
.b5 span { padding-bottom: 1px; }
.sl2 { margin-left: 12px; }
.black { width: 16px; height: 16px; background: #000; margin-left: 14px; }
.b6 { width: 28px; }
.eject { margin: 0 0 1px auto; }

.ftools { height: 21px; flex: none; display: flex; border-bottom: 1px solid #777; }
.freset { width: 41px; height: 18px; margin-top: 1px; background: #f3f3f3; font-size: 11.300px; }
.ftools .grip { height: 15px; margin: 2px 5px 0 5px; }
.dis { width: 28px; height: 20px; border: 1px solid #c0c0c0; display: flex; align-items: center; justify-content: center; background: #e8e8e8; color: #a0a0a0; }
.lib { height: 260px; flex: none; overflow: hidden; display: flex; justify-content: space-between; }
.tree { font-size: 12px; letter-spacing: .06px; }
#lib { margin-top: -10px; }
.row { height: 18px; display: flex; align-items: center; white-space: nowrap; }
.row i { width: 9px; height: 9px; flex: none; margin-top: 1px; }
.row svg { flex: none; }
.row i.dn { height: 8px; width: 9px; }
.row i.rt { width: 8px; margin-right: 1px; }
.root { padding-left: 1px; }
.root svg { margin-right: 8px; }
.root .fq { margin: 0 10px 0 1px; }
.l1 { padding-left: 4px; }
.l1 svg { margin: 0 11px 0 10px; }
.l1 svg[width="9"] { margin: 0 12px 0 11px; }
.l2 { padding-left: 24px; }
.l3 { padding-left: 44px; }
.l2 svg, .l3 svg { margin: 0 12px 0 11px; }
.l2 svg.wr, .l3 svg.wr { margin: 0 16px 0 7px; }
.sub { font-style: italic; letter-spacing: .2px; }
.row.sub svg { margin: 0 8px; }
.scroll { width: 14px; background: linear-gradient(90deg, #ececec, #fff); padding: 11px 3px 1px; }
.scroll i { display: block; width: 8px; height: 248px; border-radius: 4px; background: #c1c1c1; }
.split { height: 3px; flex: none; background: #a0a0a0; }
.queries { height: 152px; }
.settings { margin: 0 8px 0 7px; width: 302px; height: 95px; border: 1px solid #a0a0a0; border-right-color: #b4b4b4; padding: 5px 5px 0 6px; font-size: 13px; }
.settings legend { padding: 0 2px 0 1px; margin-left: -1px; line-height: 18px; letter-spacing: .05px; }
.range { display: flex; align-items: center; }
.h { width: 11px; height: 20px; background: #a0a0a0; border: 1px solid #000; border-top-color: #eee; border-left-color: #eee; }
.bar { flex: 1; height: 4px; background: linear-gradient(#6cdcf0 25%, #1c88a0 25% 50%, #6ce0f4 50%); }
.nums { display: flex; justify-content: space-between; padding: 1px 3px 0; color: #8f8f8f; font: 13px/20px "DejaVu Sans Mono"; }
.corner { margin: 19px -2px 0 auto; width: 2px; height: 8px; border-right: 1px solid #333; border-bottom: 1px solid #333; }
.acts { display: flex; justify-content: flex-end; gap: 9px; padding: 10px 6px 0 0; }
.sel { width: 79px; gap: 6px; }
.aqua.fil { width: 76px; box-shadow: 0 0 2px 2px #6d9fd8; border-color: #4a7ab4; }
.sel i { width: 14px; height: 14px; background: repeating-linear-gradient(135deg, #8fb4d8 0 1px, #dbe6f0 1px 2.500px); }
.ctx { display: flex; justify-content: space-between; padding: 4px 10px 0 7px; font-size: 13px; letter-spacing: .1px; }
.ctx p { margin: 0; line-height: 22px; display: flex; }
.ctx strong { width: 55px; letter-spacing: -.1px; }
.ctx svg { margin-top: 4px; }

.timeline { height: 68px; flex: none; background: #e4e4e4; display: flex; align-items: center; justify-content: flex-end; }
.enable { width: 123px; height: 28px; gap: 5px; font-size: 11.500px; margin-right: 888px; }
.tclose { width: 22px; height: 68px; background: #a2a2a2; padding: 4px 0 0 5px; }
.statusbar { height: 25px; flex: none; background: #a2a2a2; border-top: 1px solid #333; border-bottom: 1px solid #555; display: flex; align-items: center; justify-content: flex-end; padding-right: 28px; font-size: 11px; letter-spacing: -.25px; }
.wsic { width: 15px; height: 12px; background: #fff; border: 1px solid #ddd; border-top: 2px solid #d8c8c8; margin-right: 8px; }
.statusbar span { width: 69px; white-space: nowrap; padding-bottom: 1px; }
.wn { width: 22px; height: 13px; border: 1px solid #909090; background: #bdbdbd; display: flex; align-items: center; justify-content: center; }
.wn .tl { border-right: 6px solid #7a7a7a; }
.wn .tr { border-left: 6px solid #7a7a7a; }
```
FILE: graph.js
```js
// Draws the network: hubs as radial clouds, links as dotted strokes.
const ctx = document.getElementById('net').getContext('2d');
let seed = 7;
const rnd = () => (seed = (seed * 16807) % 2147483647) / 2147483647;
const K = 2.6133, OX = 472, OY = 135; // layout units -> canvas pixels
function dot(x, y, a) {
  ctx.fillStyle = 'rgba(60,60,60,' + a + ')';
  ctx.fillRect(Math.round(x / K + OX), Math.round(y / K + OY), 1, 1);
}
function line(x1, y1, x2, y2, density = 0.5, a = 0.35) {
  const n = Math.hypot(x2 - x1, y2 - y1) / K;
  for (let i = 0; i <= n; i++) if (rnd() < density) dot(x1 + (x2 - x1) * i / n, y1 + (y2 - y1) * i / n, a);
}
// Spokes from (cx,cy) plus an even scatter inside the ellipse centred on (ex,ey)
function hub(cx, cy, ex, ey, rx, ry, spokes, d, scatter) {
  for (let i = 0; i < spokes; i++) {
    const t = rnd() * 6.2832, r = Math.sqrt(rnd() * 0.7 + 0.3);
    line(cx, cy, ex + Math.cos(t) * rx * r, ey + Math.sin(t) * ry * r, d, 0.22);
  }
  for (let i = 0; i < scatter; i++) {
    const t = i * 2.39996, r = Math.sqrt(i / scatter);
    dot(ex + Math.cos(t) * rx * r + rnd() * 3 - 1.5, ey + Math.sin(t) * ry * r + rnd() * 3 - 1.5, 0.22 + rnd() * 0.22);
  }
}
// Wedge of sparse spokes from a point towards a tip ellipse
function fan(cx, cy, ex, ey, rx, ry, n, d = 0.15) {
  for (let i = 0; i < n; i++) {
    const t = rnd() * 6.2832, r = Math.sqrt(rnd());
    const x = ex + Math.cos(t) * rx * r, y = ey + Math.sin(t) * ry * r;
    line(cx, cy, x, y, d * 0.55, 0.26);
    dot(x, y, 0.36); dot(x + rnd() * 6 - 3, y + rnd() * 6 - 3, 0.28);
  }
}
hub(1432, 962, 1436, 962, 93, 94, 330, 0.2, 1500);
hub(474, 490, 467, 488, 82, 80, 200, 0.22, 900);
hub(868, 685, 880, 683, 36, 45, 50, 0.1, 190);
fan(474, 490, 492, 335, 24, 20, 30, 0.12);
fan(474, 490, 470, 330, 18, 14, 12, 0.1);
fan(500, 430, 492, 370, 38, 22, 60, 0.2);
fan(500, 430, 498, 410, 14, 30, 60, 0.3);
fan(530, 392, 550, 360, 20, 22, 50, 0.3);
fan(540, 370, 565, 322, 18, 12, 14);
fan(450, 400, 415, 340, 12, 18, 9, 0.2);
fan(550, 410, 622, 320, 15, 16, 18, 0.06);
fan(594, 405, 634, 368, 15, 12, 20, 0.25);
fan(716, 468, 756, 438, 14, 14, 26, 0.2);
fan(300, 588, 250, 600, 16, 14, 34, 0.12);
fan(392, 654, 362, 684, 24, 18, 50, 0.1);
fan(392, 654, 390, 700, 14, 16, 26, 0.15);
fan(550, 724, 545, 766, 34, 18, 75, 0.2);
fan(488, 645, 471, 686, 12, 8, 9, 0.15);
fan(614, 735, 655, 754, 13, 10, 16, 0.2);
fan(544, 850, 532, 893, 17, 9, 22, 0.15);
fan(410, 552, 365, 560, 45, 18, 26, 0.08);
fan(515, 600, 540, 660, 26, 22, 40, 0.1);
fan(722, 1250, 703, 1320, 22, 22, 60, 0.25);
fan(730, 1220, 742, 1182, 14, 19, 24, 0.15);
fan(666, 1362, 658, 1398, 18, 15, 34, 0.2);
fan(512, 1350, 520, 1330, 26, 20, 16, 0.15);
fan(450, 1332, 432, 1345, 16, 18, 8, 0.15);
fan(480, 1370, 480, 1350, 30, 20, 12, 0.1);
fan(512, 598, 520, 600, 10, 40, 20, 0.06);
for (const l of [
  [474,490,868,685,.75,.5],[500,500,870,687,.4,.45],[474,492,538,495,1,.85],[474,490,538,496,1,.7],
  [474,490,408,552,.9,.6],[474,490,424,542,1,.7],[474,490,408,452,.8,.6],[474,490,462,400,.8,.4],[474,490,540,384,.9,.6],
  [474,490,555,356,.7,.6],[474,490,490,390,.9,.5],[474,490,488,330,.5,.4],[474,490,488,545,.8,.5],[474,490,530,560,.6,.4],
  [540,515,690,600,.3,.3],[720,586,820,655,.4,.3],[590,530,690,568,.25,.3],
  [551,723,614,723,1,.4],[612,725,712,725,1,.3],[712,725,714,800,.9,.3],[714,800,718,842,.4,.4],
  [712,725,868,685,.45,.35],[550,482,716,468,.4,.3],[716,468,682,570,.45,.3],[560,468,620,446,.4,.35],
  [440,560,392,654,.5,.4],[392,654,350,745,.3,.3],[482,550,488,645,.35,.3],[488,645,550,722,.3,.3],[500,560,550,724,.5,.35],
  [520,590,614,722,.4,.3],[545,780,544,850,.4,.35],[410,552,300,588,.3,.35],[300,588,220,640,.5,.4],[300,588,275,647,.3,.3],
  [550,725,614,738,.4,.3],[410,552,370,580,.5,.5],[550,410,620,330,.25,.3],[550,440,594,405,.3,.3],
  [722,1250,666,1362,.9,.5],[730,1210,722,1250,.8,.5],[655,1250,655,1300,.35,.3],[655,1300,668,1360,.3,.3],[686,1320,720,1345,.4,.4],
  [963,92,950,132,.5,.35],[1026,128,1007,174,.5,.35],[1077,115,1059,156,.5,.35],[1134,162,1112,204,.4,.35],[1316,273,1290,313,.5,.4],
  [1262,450,1245,482,.4,.35],[1422,460,1405,494,.5,.4],[1040,768,1074,785,.8,.4],[1100,800,1134,817,.8,.4],[1294,894,1328,911,.8,.4],
  [84,667,124,668,.4,.35],[108,838,102,854,.6,.4],[102,854,134,846,.6,.35],[134,902,178,884,.6,.4],[149,1026,172,1014,.5,.35],
  [172,1128,218,1096,.6,.3],[234,1132,271,1105,.4,.35],[240,1160,276,1130,.5,.3],[240,1160,246,1170,.6,.4],[260,1210,303,1168,.6,.35],
  [351,1196,380,1160,.3,.35],[468,1278,450,1332,.4,.35],[417,1366,450,1330,.5,.45],[512,1350,504,1388,.5,.4],[591,1380,572,1426,.35,.35],
  [757,1398,740,1486,.3,.35],[748,1453,762,1454,.6,.5],[786,1494,782,1540,.3,.35],[875,1465,868,1508,.3,.4],[901,1370,899,1480,.5,.3],
  [950,1352,950,1380,.6,.4],[968,1416,965,1524,.5,.3],[1065,1354,1065,1384,.7,.3]
]) line(...l);
for (const p of [[602,49],[1065,56],[1241,78],[1291,312],[1007,174],[95,649],[204,870],[150,1142],[207,1245],[547,1326],[628,1326],[740,1354],[867,1508],[871,1509],[1400,484],[1436,481],[260,1212],[303,1168]]) dot(p[0], p[1], .7);
```
